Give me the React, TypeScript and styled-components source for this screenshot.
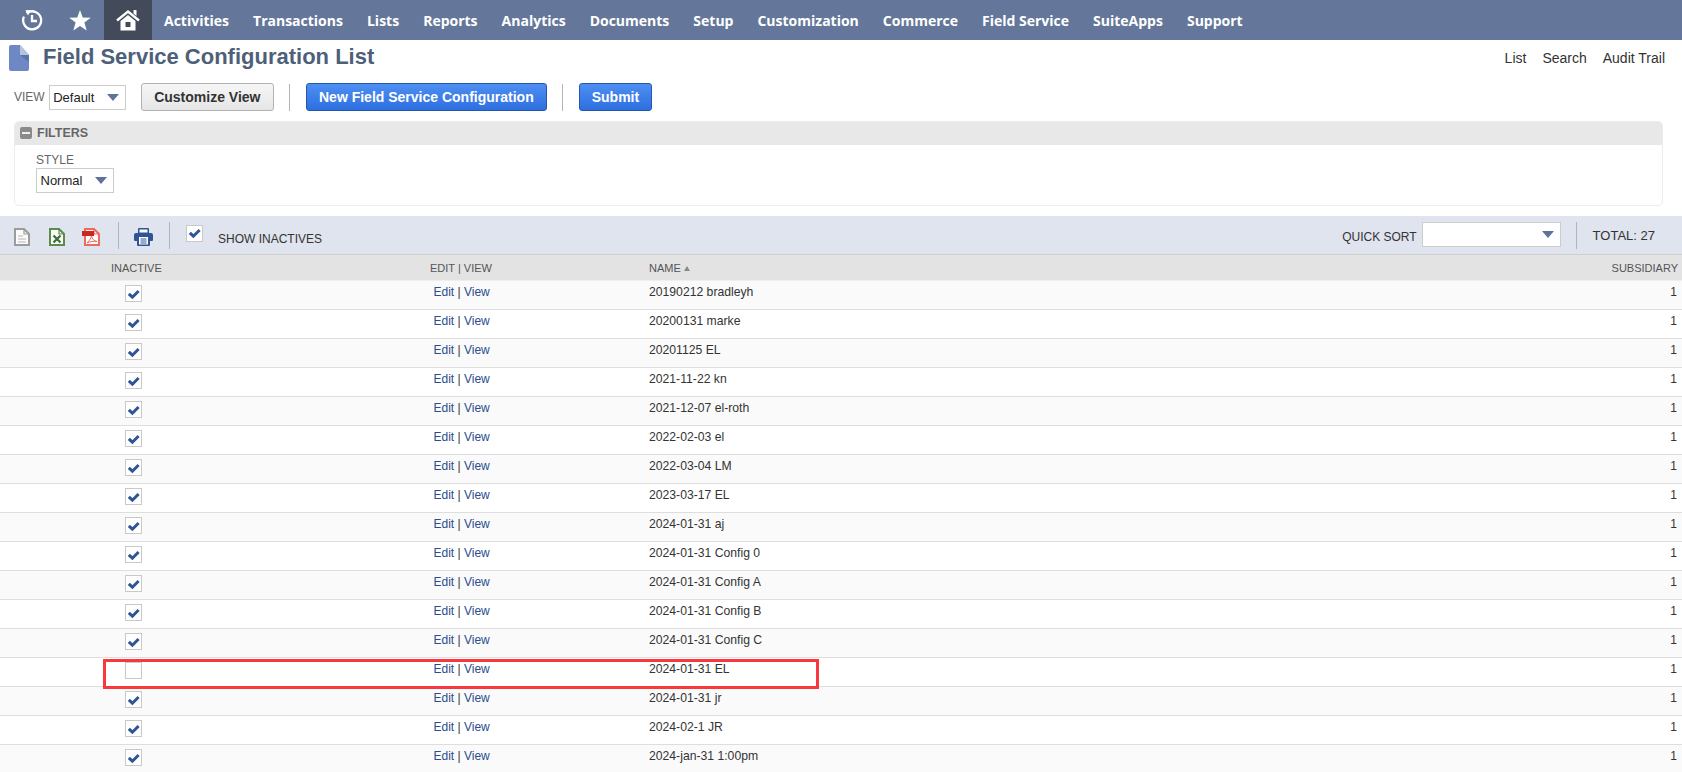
import React from "react";
import styled, { createGlobalStyle } from "styled-components";

const Global = createGlobalStyle`
  html, body { margin: 0; padding: 0; background: #fff; overflow: hidden; height: 772px; }
  body { font-family: "Liberation Sans", Arial, sans-serif; color: #333; }
  * { box-sizing: border-box; }
`;

const Page = styled.div`
  width: 1682px;
  height: 772px;
  overflow: hidden;
`;

/* ---------- navigation ---------- */
const Nav = styled.nav`
  height: 40px;
  background: #64779a;
  display: flex;
  align-items: stretch;
`;
const NavIcon = styled.div<{ $w: number; $active?: boolean; $ml?: number }>`
  width: ${(p) => p.$w}px;
  margin-left: ${(p) => p.$ml ?? 0}px;
  display: flex;
  align-items: center;
  justify-content: center;
  background: ${(p) => (p.$active ? "#434a5a" : "transparent")};
`;
const NavList = styled.div`
  display: flex;
  align-items: center;
  gap: 24px;
  margin-left: 12px;
`;
const NavItem = styled.span`
  font-family: "Open Sans", sans-serif;
  font-weight: 700;
  font-size: 14px;
  color: #fff;
  white-space: nowrap;
`;

/* ---------- title ---------- */
const TitleRow = styled.header`
  height: 36px;
  display: flex;
  align-items: center;
  padding: 0 17px 0 9px;
`;
const Title = styled.h1`
  margin: 0 0 2px 14px;
  font-size: 22px;
  font-weight: 700;
  color: #4d5f79;
  white-space: nowrap;
`;
const TopLinks = styled.div`
  margin-left: auto;
  display: flex;
  gap: 16px;
`;
const TopLink = styled.a`
  font-size: 14px;
  color: #333;
`;

/* ---------- actions ---------- */
const Actions = styled.div`
  margin-top: 7px;
  height: 28px;
  padding-left: 14px;
  display: flex;
  align-items: center;
  gap: 15px;
`;
const ViewGroup = styled.div`
  display: flex;
  align-items: center;
  gap: 4px;
`;
const FieldLabel = styled.span`
  font-size: 12px;
  color: #666;
`;
const Select = styled.div<{ $w: number; $h?: number }>`
  width: ${(p) => p.$w}px;
  height: ${(p) => p.$h ?? 25}px;
  background: #fff;
  border: 1px solid #ccc;
  display: flex;
  align-items: center;
  justify-content: space-between;
  padding: 0 6px 0 3.5px;
  font-size: 13px;
  color: #222;
`;
const Caret = styled.span`
  width: 0;
  height: 0;
  border-left: 6px solid transparent;
  border-right: 6px solid transparent;
  border-top: 7px solid #5f7299;
`;
const Button = styled.button<{ $primary?: boolean }>`
  height: 28px;
  padding: 0 ${(p) => (p.$primary ? 12 : 12.5)}px;
  border-radius: 3px;
  font-family: "Liberation Sans", Arial, sans-serif;
  font-weight: 700;
  font-size: 14px;
  white-space: nowrap;
  color: ${(p) => (p.$primary ? "#fff" : "#333")};
  border: 1px solid ${(p) => (p.$primary ? "#2358ad" : "#b2b2b2")};
  background: ${(p) =>
    p.$primary
      ? "linear-gradient(#4d8ff2, #2e6fe0)"
      : "linear-gradient(#f6f6f6, #e6e6e6)"};
`;
const Divider = styled.span<{ $h?: number }>`
  width: 1px;
  height: ${(p) => p.$h ?? 27}px;
  background: #b5b5b5;
  margin-right: 1px;
`;

/* ---------- filters ---------- */
const FilterBox = styled.section`
  margin: 10px 19px 0 14px;
  height: 85px;
  border: 1px solid #ececec;
  border-radius: 5px;
  overflow: hidden;
`;
const FilterHead = styled.div`
  height: 23px;
  background: #e8e8e8;
  display: flex;
  align-items: center;
  gap: 5px;
  padding: 0 0 1px 5px;
  font-size: 12.5px;
  font-weight: 700;
  color: #666;
`;
const Minus = styled.span`
  width: 12px;
  height: 12px;
  border-radius: 2px;
  background: #8a8a8a;
  display: flex;
  align-items: center;
  justify-content: center;
  &::after {
    content: "";
    width: 8px;
    height: 2px;
    background: #eee;
  }
`;
const FilterBody = styled.div`
  padding: 8px 0 0 21px;
  display: flex;
  flex-direction: column;
  align-items: flex-start;
`;
const StyleLabel = styled.span`
  font-size: 12px;
  line-height: 14px;
  color: #666;
`;
const StyleSelect = styled(Select)`
  margin-top: 1px;
`;

/* ---------- toolbar ---------- */
const Toolbar = styled.div`
  margin-top: 10px;
  height: 39px;
  background: #e0e4ee;
  border-bottom: 1px solid #cfcfcf;
  display: flex;
  align-items: center;
  padding: 0 26px 0 14px;
`;
const ToolIcon = styled.span<{ $ml?: number }>`
  display: flex;
  margin-left: ${(p) => p.$ml ?? 0}px;
  margin-top: 3px;
`;
const ToolDivider = styled.span<{ $ml: number }>`
  width: 1px;
  height: 27px;
  background: #b0b4bc;
  margin-left: ${(p) => p.$ml}px;
`;
const CheckSlot = styled.span<{ $ml: number }>`
  display: flex;
  margin-left: ${(p) => p.$ml}px;
  margin-bottom: 4px;
`;
const ToolLabel = styled.span<{ $ml: number }>`
  margin-left: ${(p) => p.$ml}px;
  font-size: 12px;
  color: #333;
  margin-top: 7px;
  white-space: nowrap;
`;
const ToolRight = styled.div`
  margin-left: auto;
  display: flex;
  align-items: center;
`;
const TotalText = styled.span`
  font-size: 13px;
  color: #333;
  margin-left: 16px;
  margin-right: 1px;
`;
const QuickLabel = styled.span`
  font-size: 12px;
  color: #333;
  margin-top: 3px;
`;
const QuickSelect = styled(Select)`
  margin-left: 5px;
  margin-bottom: 2px;
`;

/* ---------- table ---------- */
const HeaderRow = styled.div`
  height: 26px;
  background: #e3e3e3;
  border-bottom: 1px solid #efefef;
  display: grid;
  grid-template-columns: 430px 219px 1fr auto;
  align-items: center;
  padding-right: 4px;
  font-size: 11px;
  color: #555;
`;
const HeadInactive = styled.span`
  padding-left: 111px;
`;
const SortMark = styled.span`
  display: inline-block;
  width: 0;
  height: 0;
  margin-left: 3px;
  vertical-align: 1px;
  border-left: 3px solid transparent;
  border-right: 3px solid transparent;
  border-bottom: 5px solid #888;
`;
const Row = styled.div<{ $odd: boolean }>`
  position: relative;
  height: 29px;
  background: ${(p) => (p.$odd ? "#fafafa" : "#fff")};
  border-bottom: 1.5px solid #dedede;
  display: grid;
  grid-template-columns: 430px 219px 1fr auto;
  padding-right: 5px;
  font-size: 12px;
  line-height: 14px;
  color: #333;
`;
const CheckCell = styled.div`
  padding: 4px 0 0 125px;
`;
const ActionCell = styled.div`
  padding: 4px 0 0 3.5px;
  white-space: nowrap;
`;
const NameCell = styled.div`
  padding-top: 4px;
  font-size: 12.2px;
  white-space: nowrap;
`;
const NumberCell = styled.div`
  padding-top: 4px;
`;
const RowLink = styled.a`
  color: #2a4d8f;
`;
const CheckBox = styled.span`
  display: flex;
  width: 17px;
  height: 17px;
  background: #fff;
  border: 1px solid #c9c9c9;
  align-items: center;
  justify-content: center;
`;
const Highlight = styled.div`
  position: absolute;
  z-index: 1;
  left: 103px;
  top: 1px;
  width: 716px;
  height: 30px;
  border: 3px solid #f8383c;
  pointer-events: none;
`;

const Check = ({ on = true }: { on?: boolean }) => (
  <CheckBox>
    {on && (
      <svg width="13" height="12" viewBox="0 0 13 12">
        <path d="M1.8 5.8 L5.4 9.2 L11.6 3" fill="none" stroke="#2f5596" strokeWidth="3" />
      </svg>
    )}
  </CheckBox>
);

const HistoryIcon = () => (
  <svg width="22" height="22" viewBox="0 0 22 22" fill="none" stroke="#fff" strokeWidth="2.3">
    <path d="M6.5 3.6 A9 9 0 1 1 2.6 8.5" strokeLinecap="round" />
    <path d="M4.4 1.2 L10 1 L7 6.4 Z" fill="#fff" stroke="none" />
    <path d="M11 6 V12 H16" />
  </svg>
);
const StarIcon = () => (
  <svg width="22" height="21" viewBox="0 0 22 21">
    <path d="M11 0 L13.7 7.4 L21.8 7.7 L15.4 12.6 L17.7 20.6 L11 16 L4.3 20.6 L6.6 12.6 L.2 7.7 L8.3 7.4 Z" fill="#fff" />
  </svg>
);
const HomeIcon = () => (
  <svg width="24" height="22" viewBox="0 0 24 22">
    <path d="M1 11.5 L12 2.5 L23 11.5" fill="none" stroke="#fff" strokeWidth="2.4" />
    <path d="M17.5 1 H20.5 V7 L17.5 4.5 Z" fill="#fff" />
    <path fillRule="evenodd" d="M4.5 12 L12 6 L19.5 12 V21.5 H4.5 Z M9.5 13 V18 H14.5 V13 Z" fill="#fff" />
  </svg>
);
const PageIcon = () => (
  <svg width="20" height="26" viewBox="0 0 20 26">
    <path d="M2 0 H11 L20 10 V24 a2 2 0 0 1 -2 2 H2 a2 2 0 0 1 -2 -2 V2 a2 2 0 0 1 2 -2 Z" fill="#6d88c4" />
    <path d="M11 0 L20 10 H11 Z" fill="#b7c3dc" />
    <path d="M11 10 H20 V17 Z" fill="#5a73aa" />
  </svg>
);
const DocIcon = () => (
  <svg width="16" height="18" viewBox="0 0 16 18">
    <path d="M1 1 H10 L15 6 V17 H1 Z" fill="#fbfbfb" stroke="#9b9b9b" strokeWidth="2" />
    <path d="M10 1 V6 H15" fill="none" stroke="#9b9b9b" strokeWidth="1.2" />
    <path d="M4 8 H9 M4 11 H12 M4 14 H12" stroke="#b5b5b5" strokeWidth="1" />
  </svg>
);
const ExcelIcon = () => (
  <svg width="16" height="18" viewBox="0 0 16 18">
    <path d="M1 1 H10 L15 6 V17 H1 Z" fill="#fbfbfb" stroke="#5b8c4a" strokeWidth="2" />
    <path d="M10 1 V6 H15" fill="none" stroke="#5b8c4a" strokeWidth="1.2" />
    <path d="M4.5 7.5 L11.5 14.5 M11.5 7.5 L4.5 14.5" stroke="#3c6b33" strokeWidth="2.2" />
  </svg>
);
const PdfIcon = () => (
  <svg width="18" height="18" viewBox="0 0 18 18">
    <path d="M3 1 H12 L17 6 V17 H3 Z" fill="#fbfbfb" stroke="#ee6a5c" strokeWidth="2" />
    <path d="M12 1 V6 H17" fill="none" stroke="#ee6a5c" strokeWidth="1.2" />
    <rect x="0" y="3" width="12" height="5" fill="#c9281c" />
    <path d="M5 15 C8 12 9 10 9.5 8 C10 11 12 13 15 13.5 C12 13 8 13.5 5 15 Z" fill="none" stroke="#e0685c" strokeWidth="0.9" />
  </svg>
);
const PrintIcon = () => (
  <svg width="19" height="18" viewBox="0 0 19 18">
    <path d="M4 1 a1 1 0 0 1 1 -1 H14 a1 1 0 0 1 1 1 V5 H4 Z" fill="#2f5596" />
    <rect x="5.5" y="1.5" width="8" height="3" fill="#fff" />
    <path d="M2 5 H17 a2 2 0 0 1 2 2 V12 a1 1 0 0 1 -1 1 H16 V17 a1 1 0 0 1 -1 1 H4 a1 1 0 0 1 -1 -1 V13 H1 a1 1 0 0 1 -1 -1 V7 a2 2 0 0 1 2 -2 Z" fill="#2f5596" />
    <rect x="5" y="9" width="9" height="7.5" fill="#fff" />
    <path d="M6.5 11 H12.5 M6.5 13 H12.5 M6.5 15 H12.5" stroke="#2f5596" strokeWidth="1" />
  </svg>
);

const navItems = ["Activities", "Transactions", "Lists", "Reports", "Analytics", "Documents", "Setup", "Customization", "Commerce", "Field Service", "SuiteApps", "Support"];
const rows = [
  "20190212 bradleyh", "20200131 marke", "20201125 EL", "2021-11-22 kn", "2021-12-07 el-roth",
  "2022-02-03 el", "2022-03-04 LM", "2023-03-17 EL", "2024-01-31 aj", "2024-01-31 Config 0",
  "2024-01-31 Config A", "2024-01-31 Config B", "2024-01-31 Config C", "2024-01-31 EL",
  "2024-01-31 jr", "2024-02-1 JR", "2024-jan-31 1:00pm",
];

export default function App() {
  return (
    <Page>
      <Global />
      <Nav>
        <NavIcon $w={64}><HistoryIcon /></NavIcon>
        <NavIcon $w={32}><StarIcon /></NavIcon>
        <NavIcon $w={48} $ml={8} $active><HomeIcon /></NavIcon>
        <NavList>
          {navItems.map((n) => <NavItem key={n}>{n}</NavItem>)}
        </NavList>
      </Nav>

      <TitleRow>
        <PageIcon />
        <Title>Field Service Configuration List</Title>
        <TopLinks>
          <TopLink>List</TopLink>
          <TopLink>Search</TopLink>
          <TopLink>Audit Trail</TopLink>
        </TopLinks>
      </TitleRow>

      <Actions>
        <ViewGroup>
          <FieldLabel>VIEW</FieldLabel>
          <Select $w={77}>Default<Caret /></Select>
        </ViewGroup>
        <Button>Customize View</Button>
        <Divider />
        <Button $primary>New Field Service Configuration</Button>
        <Divider />
        <Button $primary>Submit</Button>
      </Actions>

      <FilterBox>
        <FilterHead><Minus />FILTERS</FilterHead>
        <FilterBody>
          <StyleLabel>STYLE</StyleLabel>
          <StyleSelect $w={78}>Normal<Caret /></StyleSelect>
        </FilterBody>
      </FilterBox>

      <Toolbar>
        <ToolIcon><DocIcon /></ToolIcon>
        <ToolIcon $ml={19}><ExcelIcon /></ToolIcon>
        <ToolIcon $ml={17}><PdfIcon /></ToolIcon>
        <ToolDivider $ml={18} />
        <ToolIcon $ml={15}><PrintIcon /></ToolIcon>
        <ToolDivider $ml={16} />
        <CheckSlot $ml={16}><Check /></CheckSlot>
        <ToolLabel $ml={15}>SHOW INACTIVES</ToolLabel>
        <ToolRight>
          <QuickLabel>QUICK SORT</QuickLabel>
          <QuickSelect $w={139}><span /><Caret /></QuickSelect>
          <ToolDivider $ml={15} />
          <TotalText>TOTAL: 27</TotalText>
        </ToolRight>
      </Toolbar>

      <HeaderRow>
        <HeadInactive>INACTIVE</HeadInactive>
        <span>EDIT | VIEW</span>
        <span>NAME<SortMark /></span>
        <span>SUBSIDIARY</span>
      </HeaderRow>

      {rows.map((name, i) => (
        <Row key={name} $odd={i % 2 === 0}>
          <CheckCell><Check on={name !== "2024-01-31 EL"} /></CheckCell>
          <ActionCell><RowLink>Edit</RowLink> | <RowLink>View</RowLink></ActionCell>
          <NameCell>{name}</NameCell>
          <NumberCell>1</NumberCell>
          {name === "2024-01-31 EL" && <Highlight />}
        </Row>
      ))}
    </Page>
  );
}
